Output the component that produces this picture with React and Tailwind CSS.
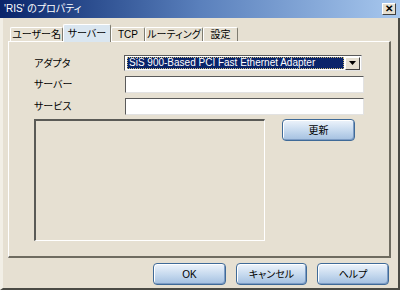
import React from "react";

const font = "font-['Liberation_Sans','Noto_Sans_CJK_JP',sans-serif] [font-feature-settings:'palt']";

const Tab = ({ label, width, active }) => {
  if (active) {
    return (
      <div
        className={`${width} h-[18px] -mb-px z-10 relative bg-[#dae6f0] border-t border-l border-white border-r border-r-[#7f7c70] rounded-t-[2px] flex items-start justify-center pt-[3px] text-[10px] leading-[11px] text-black`}
      >
        {label}
      </div>
    );
  }
  return (
    <div
      className={`${width} h-[14px] bg-[#e6e0d2] border-t border-l border-white border-r border-r-[#7f7c70] rounded-t-[2px] flex items-center justify-center text-[10px] text-black leading-none`}
    >
      {label}
    </div>
  );
};

const XpButton = ({ children, width, height = "h-[22px]" }) => (
  <div
    className={`${width} ${height} rounded-[4px] border border-[#3f6a98] bg-gradient-to-b from-[#eef4fb] via-[#c8dbef] to-[#a4c0e0] shadow-[inset_1px_1px_0_#ffffff,inset_-1px_-1px_0_#7d9cc4] flex items-center justify-center text-[10px] text-black`}
  >
    {children}
  </div>
);

const TextBox = () => (
  <div className="w-[239px] h-[17px] bg-white border-t border-l border-[#5a5a5a] border-b border-r border-b-[#e2e2e2] border-r-[#e2e2e2]" />
);

export default function App() {
  return (
    <div className={`w-[400px] h-[290px] flex flex-col bg-[#e6e0d2] ${font}`}>
      {/* title bar */}
      <div className="h-[18px] shrink-0 flex items-center justify-between bg-gradient-to-r from-[#0a246a] via-[#5a80bc] to-[#a8c8ee] pl-[4px] pr-[4px]">
        <span className="text-white text-[10px] leading-none">'RIS' のプロパティ</span>
        <div className="w-[14px] h-[12px] bg-[#e6e0d2] border border-t-white border-l-white border-b-[#404040] border-r-[#404040] flex items-center justify-center text-[10px] font-bold leading-none text-black">
          ✕
        </div>
      </div>

      {/* body */}
      <div className="flex-1 flex flex-col border-l-[3px] border-l-[#f2efe6] border-r-2 border-r-[#4a4a44] border-b-2 border-b-[#4a4a44] pl-[5px] pr-[7px] pt-[6px]">
        {/* tabs */}
        <div className="h-[17px] flex items-end pl-[2px]">
          <Tab label="ユーザー名" width="w-[53px]" />
          <Tab label="サーバー" width="w-[48px]" active />
          <Tab label="TCP" width="w-[34px]" />
          <Tab label="ルーティング" width="w-[58px]" />
          <Tab label="設定" width="w-[35px]" />
        </div>

        {/* panel */}
        <div className="h-[217px] border-t border-l border-white border-r-2 border-r-[#6e6b60] border-b-2 border-b-[#6e6b60] pl-[25px] pt-[13px] flex flex-col">
          <div className="flex items-center h-[16px]">
            <span className="w-[90px] text-[10px] text-black">アダプタ</span>
            <div className="w-[238px] h-[16px] bg-white border-t border-l border-[#5a5a5a] border-b border-r border-b-[#e2e2e2] border-r-[#e2e2e2] flex items-center pl-[2px] pr-[1px] gap-[1px]">
              <div className="flex-1 h-[12px] bg-[#0a246a] border border-dotted border-[#c8b878] flex items-center pl-[1px] text-white text-[10px] leading-none whitespace-nowrap">
                SiS 900-Based PCI Fast Ethernet Adapter
              </div>
              <div className="w-[15px] h-[13px] bg-[#e6e0d2] border border-t-white border-l-white border-b-[#404040] border-r-[#404040] flex items-center justify-center">
                <svg width="7" height="4" viewBox="0 0 7 4">
                  <path d="M0 0h7L3.5 4z" fill="#000" />
                </svg>
              </div>
            </div>
          </div>

          <div className="flex items-center h-[17px] mt-[5px]">
            <span className="w-[91px] text-[10px] text-black">サーバー</span>
            <TextBox />
          </div>

          <div className="flex items-center h-[17px] mt-[5px]">
            <span className="w-[91px] text-[10px] text-black">サービス</span>
            <TextBox />
          </div>

          <div className="flex items-start mt-[4px]">
            <div className="w-[231px] h-[122px] border-t-2 border-l-2 border-t-[#5a5a56] border-l-[#5a5a56] border-b border-r border-white bg-[#e6e0d2]" />
            <div className="ml-[17px]">
              <XpButton width="w-[73px]" height="h-[22px]">更新</XpButton>
            </div>
          </div>
        </div>

        {/* buttons */}
        <div className="flex justify-end gap-[10px] pr-[2px] mt-[5px]">
          <XpButton width="w-[73px]">OK</XpButton>
          <XpButton width="w-[71px]">キャンセル</XpButton>
          <XpButton width="w-[72px]">ヘルプ</XpButton>
        </div>
      </div>
    </div>
  );
}
